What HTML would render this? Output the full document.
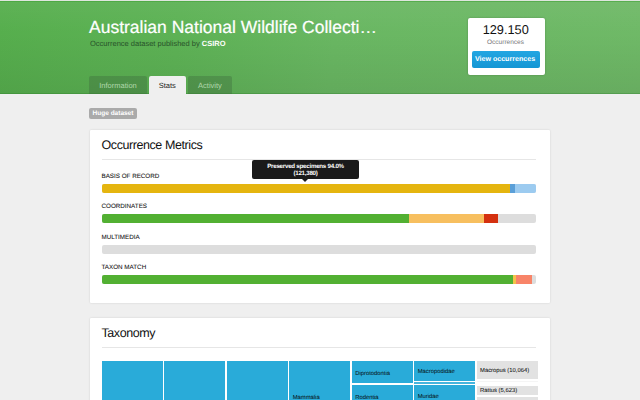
<!DOCTYPE html>
<html>
<head>
<meta charset="utf-8">
<title>Australian National Wildlife Collection</title>
<style>
*{box-sizing:border-box;margin:0;padding:0}
html,body{width:640px;height:400px;overflow:hidden}
body{text-rendering:geometricPrecision;background:#efefef;font-family:"Liberation Sans",Arial,sans-serif;position:relative;color:#222}
.abs{position:absolute}
#header{left:0;top:0;width:640px;height:94px;background:linear-gradient(to bottom,rgba(255,255,255,.05) 0%,rgba(255,255,255,0) 35%,rgba(0,0,0,.07) 100%),linear-gradient(97deg,#56ae4d 0%,#5db255 28%,#69b762 52%,#6fb967 100%);box-shadow:inset 0 -1px 0 rgba(30,110,30,.25);overflow:hidden}
#topline{left:0;top:0;width:640px;height:1px;background:#dfe6de;box-shadow:0 1px 0 rgba(60,160,50,.5)}
h1{left:89px;top:14.5px;-webkit-text-stroke:.2px #fff;font-size:17.5px;font-weight:normal;color:#fff;white-space:nowrap;line-height:24px}
#sub{left:90px;top:38.2px;font-size:7.5px;line-height:12px;color:#28522a;white-space:nowrap}
#sub b{color:#fff}
.tab{top:76px;height:18px;font-size:7.5px;line-height:19px;text-align:center;background:rgba(60,100,60,.34);color:#b0d8ab;border-radius:2px 2px 0 0}
.tab.on{background:#efefef;color:#222}
#box{left:468px;top:18px;width:77px;height:57px;background:#fff;border-radius:2px;box-shadow:0 0 2px rgba(0,0,0,.25)}
#num{left:-.8px;top:4.2px;width:77px;text-align:center;font-size:12.75px;line-height:16px;color:#111}
#occ{left:-1px;top:21.2px;width:77px;text-align:center;font-size:6.5px;line-height:8px;color:#777}
#btn{left:4px;top:33px;width:68px;height:17px;background:linear-gradient(#22a6e2,#1496d4);border-radius:2px;color:#fff;font-weight:bold;font-size:7.1px;line-height:16px;text-align:center;text-indent:-2px}
#badge{left:89px;top:108px;width:48px;height:11px;background:#aaa;border-radius:2px;color:#fff;font-weight:bold;font-size:6.5px;line-height:11px;text-align:center}
.card{background:#fff;border-radius:1px;box-shadow:0 0 2px rgba(0,0,0,.15)}
.ct{font-size:12.5px;letter-spacing:-.42px;line-height:16px;color:#111;white-space:nowrap}
.sep{height:1px;background:#e6e6e6}
.lbl{font-size:6.28px;line-height:8px;color:#111;-webkit-text-stroke:.07px #111;white-space:nowrap}
.bar{left:12px;width:434px;height:9px;background:#dddddd;border-radius:2px;overflow:hidden}
.bar i{position:absolute;top:0;height:9px;display:block}
#tip{left:252px;top:160px;width:107px;height:18.5px;background:#1a1a1a;border-radius:2px;color:#fff;font-weight:bold;font-size:6.2px;letter-spacing:-.25px;line-height:7.2px;text-align:center;padding-top:3.2px}
#tip:after{content:"";position:absolute;left:50.2px;top:18.5px;border:3px solid transparent;border-top-color:#1a1a1a;border-bottom:0}
.cell{background:#29abd9;font-size:5.85px;color:#0a1a24;-webkit-text-stroke:.06px #0a1a24;white-space:nowrap;display:flex;align-items:center;padding-left:3.5px;padding-top:2.8px}
.g{background:#e2e2e2;color:#111;padding-left:3.2px}
</style>
</head>
<body>
<div id="header" class="abs"></div>
<div id="topline" class="abs"></div>
<h1 class="abs">Australian National Wildlife Collecti…</h1>
<div id="sub" class="abs">Occurrence dataset published by <b>CSIRO</b></div>
<div class="abs tab" style="left:89px;width:58px">Information</div>
<div class="abs tab on" style="left:149px;width:36.5px">Stats</div>
<div class="abs tab" style="left:188px;width:44px">Activity</div>
<div id="box" class="abs">
  <div id="num" class="abs">129.150</div>
  <div id="occ" class="abs">Occurrences</div>
  <div id="btn" class="abs">View occurrences</div>
</div>
<div id="badge" class="abs">Huge dataset</div>

<div class="abs card" style="left:89.5px;top:130px;width:460.5px;height:173px">
  <div class="abs ct" style="left:12px;top:6.75px">Occurrence Metrics</div>
  <div class="abs sep" style="left:12px;top:29px;width:434px"></div>
  <div class="abs lbl" style="left:12px;top:42.8px">BASIS OF RECORD</div>
  <div class="abs bar" style="top:53.5px"><i style="left:0;width:408px;background:#e5b50f"></i><i style="left:408px;width:5.5px;background:#5a9fd8"></i><i style="left:413.5px;width:20.5px;background:#9ccbf0"></i></div>
  <div class="abs lbl" style="left:12px;top:73.3px">COORDINATES</div>
  <div class="abs bar" style="top:84px"><i style="left:0;width:307.5px;background:#52b032"></i><i style="left:307.5px;width:74.5px;background:#f7bf5f"></i><i style="left:382px;width:14.5px;background:#d4300f"></i></div>
  <div class="abs lbl" style="left:12px;top:103.8px">MULTIMEDIA</div>
  <div class="abs bar" style="top:114.5px"></div>
  <div class="abs lbl" style="left:12px;top:134.3px">TAXON MATCH</div>
  <div class="abs bar" style="top:145px"><i style="left:0;width:411.5px;background:#52b032"></i><i style="left:411.5px;width:2.5px;background:#f3c24a"></i><i style="left:414px;width:16.5px;background:#f88468"></i></div>
</div>
<div id="tip" class="abs">Preserved specimens 94.0%<br>(121,380)</div>

<div class="abs card" style="left:89.5px;top:318px;width:460.5px;height:100px">
  <div class="abs ct" style="left:12px;top:6.75px">Taxonomy</div>
  <div class="abs sep" style="left:12px;top:29.00px;width:434px"></div>
  <div class="abs cell" style="left:12.20px;top:42.90px;width:60.9px;height:60px"></div>
  <div class="abs cell" style="left:74.70px;top:42.90px;width:60.9px;height:60px"></div>
  <div class="abs cell" style="left:137.20px;top:42.90px;width:60.9px;height:60px"></div>
  <div class="abs cell" style="left:199.70px;top:42.90px;width:60.9px;height:70px;padding-top:3.8px">Mammalia</div>
  <div class="abs cell" style="left:262.20px;top:42.90px;width:60.9px;height:22.3px;padding-top:3.9px">Diprotodontia</div>
  <div class="abs cell" style="left:262.20px;top:67.10px;width:60.9px;height:22px;padding-top:3.5px">Rodentia</div>
  <div class="abs cell" style="left:324.70px;top:42.90px;width:60.9px;height:19.8px">Macropodidae</div>
  <div class="abs cell" style="left:324.70px;top:64.30px;width:60.9px;height:1.7px;background:#45b5dd;padding:0"></div>
  <div class="abs cell" style="left:324.70px;top:67.30px;width:60.9px;height:21.8px;padding-top:2.2px">Muridae</div>
  <div class="abs cell g" style="left:387.40px;top:42.90px;width:60.9px;height:18px">Macropus (10,064)</div>
  <div class="abs cell g" style="left:387.40px;top:62.70px;width:60.9px;height:1.8px;background:#f5f5f5;padding:0"></div>
  <div class="abs cell g" style="left:387.40px;top:67.50px;width:60.9px;height:9.2px">Rattus (5,623)</div>
  <div class="abs cell g" style="left:387.40px;top:78.60px;width:60.9px;height:9px"></div>
</div>
</body>
</html>
